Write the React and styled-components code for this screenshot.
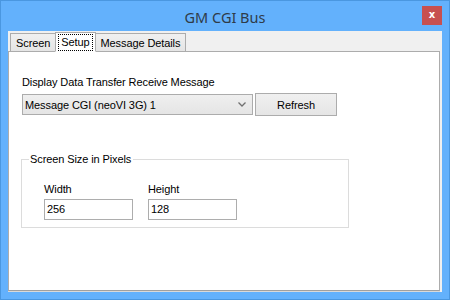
import React from 'react'
import styled, { createGlobalStyle } from 'styled-components'

const GlobalStyle = createGlobalStyle`
  html, body {
    margin: 0;
    padding: 0;
    background: #ffffff;
  }
  * { box-sizing: border-box; }
`

const Window = styled.div`
  width: 450px;
  height: 300px;
  background: #63b1fc;
  border: 1px solid #4a97e0;
  display: flex;
  flex-direction: column;
  font-family: "Liberation Sans", Arial, sans-serif;
  font-size: 11px;
  letter-spacing: -0.1px;
  color: #000;
`

const TitleBar = styled.div`
  height: 30px;
  display: grid;
  grid-template-columns: 1fr auto 1fr;
  align-items: center;
`

const Title = styled.div`
  grid-column: 2;
  font-family: "Noto Sans", "Open Sans", sans-serif;
  font-size: 14.5px;
  letter-spacing: 0;
  color: #2f3b48;
  padding-top: 1px;
`

const CloseButton = styled.div`
  grid-column: 3;
  justify-self: end;
  align-self: start;
  margin-top: 5px;
  margin-right: 7px;
  width: 20px;
  height: 19px;
  background: #c75050;
  color: #fff;
  font-family: "DejaVu Sans", sans-serif;
  font-weight: bold;
  font-size: 10px;
  line-height: 18px;
  text-align: center;
`

const Client = styled.div`
  margin: 0 7px 0 7px;
  height: 261px;
  background: #f0f0f0;
  display: flex;
  flex-direction: column;
`

const TabStrip = styled.div`
  display: flex;
  align-items: flex-end;
  height: 20px;
  padding-left: 2px;
  position: relative;
  z-index: 1;
`

const Tab = styled.div`
  height: ${p => (p.$active ? 20 : 18)}px;
  padding: 0 ${p => (p.$active ? 2 : 5)}px;
  margin: 0 ${p => (p.$active ? -1 : 0)}px;
  display: flex;
  align-items: center;
  border: 1px solid #acacac;
  border-bottom: ${p => (p.$active ? '1px solid #ffffff' : 'none')};
  background: ${p => (p.$active ? '#ffffff' : 'linear-gradient(#f0f0f0, #e5e5e5)')};
  margin-bottom: ${p => (p.$active ? -1 : 0)}px;
  position: relative;
  z-index: ${p => (p.$active ? 2 : 1)};
  white-space: nowrap;
  & + & { border-left: ${p => (p.$active ? '1px solid #acacac' : 'none')}; }
`

const FocusText = styled.span`
  border: 1px dotted #000;
  padding: 1px 2px 2px;
`

const Panel = styled.div`
  flex: 1;
  margin: 0 2px 1px 0;
  background: #ffffff;
  border: 1px solid #acacac;
  border-bottom-color: #a0a0a0;
  box-shadow: 0 1px 0 #d9d9d9;
  padding: 24px 0 0 13px;
`

const FieldLabel = styled.div`
  line-height: 13px;
  margin-bottom: ${p => p.$gap || 3}px;
  color: #000;
`

const Row = styled.div`
  display: flex;
  align-items: center;
  gap: 2px;
`

const Combo = styled.div`
  width: 231px;
  height: 21px;
  border: 1px solid #acacac;
  background: linear-gradient(#efefef, #e5e5e5);
  display: flex;
  align-items: center;
  justify-content: space-between;
  padding: 0 6px 0 2px;
`

const Button = styled.div`
  width: 82px;
  height: 23px;
  border: 1px solid #acacac;
  background: linear-gradient(#f0f0f0, #e5e5e5);
  display: flex;
  align-items: center;
  justify-content: center;
`

const GroupBox = styled.fieldset`
  width: 328px;
  height: 75px;
  margin: 37px 0 0 -1px;
  padding: 17px 0 0 22px;
  border: 1px solid #dcdcdc;
  display: flex;
  gap: 15px;
  align-items: flex-start;
`

const Legend = styled.legend`
  margin-left: -15px;
  padding: 0 2px 0 1px;
  line-height: 13px;
`

const Field = styled.div`
  display: flex;
  flex-direction: column;
`

const Input = styled.div`
  width: 89px;
  height: 21px;
  border: 1px solid #adadad;
  background: #fff;
  padding: 3px 0 0 2px;
  line-height: 13px;
`

const Chevron = () => (
  <svg width="8" height="5" viewBox="0 0 8 5">
    <path d="M0.5 0.5 L4 4 L7.5 0.5" fill="none" stroke="#707070" strokeWidth="1.3" />
  </svg>
)

export default function App() {
  return (
    <>
      <GlobalStyle />
      <Window>
        <TitleBar>
          <Title>GM CGI Bus</Title>
          <CloseButton>x</CloseButton>
        </TitleBar>
        <Client>
          <TabStrip>
            <Tab>Screen</Tab>
            <Tab $active><FocusText>Setup</FocusText></Tab>
            <Tab>Message Details</Tab>
          </TabStrip>
          <Panel>
            <FieldLabel $gap={4}>Display Data Transfer Receive Message</FieldLabel>
            <Row>
              <Combo>
                <span>Message CGI (neoVI 3G) 1</span>
                <Chevron />
              </Combo>
              <Button>Refresh</Button>
            </Row>
            <GroupBox>
              <Legend>Screen Size in Pixels</Legend>
              <Field>
                <FieldLabel>Width</FieldLabel>
                <Input>256</Input>
              </Field>
              <Field>
                <FieldLabel>Height</FieldLabel>
                <Input>128</Input>
              </Field>
            </GroupBox>
          </Panel>
        </Client>
      </Window>
    </>
  )
}
